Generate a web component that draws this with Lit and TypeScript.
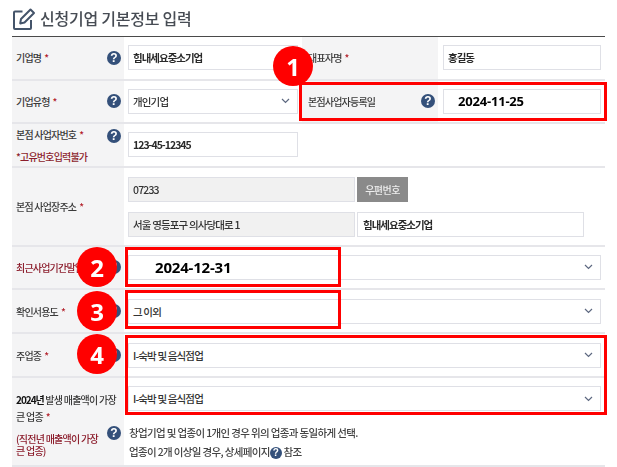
import { LitElement, html, css, svg } from "lit";
import { customElement } from "lit/decorators.js";

const help = () => html`<span class="help">?</span>`;
const chev = html`<svg class="chev" width="9" height="6" viewBox="0 0 9 6"><path d="M1 1 L4.5 4.5 L8 1" fill="none" stroke="#5d6880" stroke-width="1.2"/></svg>`;
const pencil = svg`<path d="M10 4.5H2.5a1 1 0 0 0-1 1V21a1 1 0 0 0 1 1h15a1 1 0 0 0 1-1v-8" fill="none" stroke="#44546a" stroke-width="2"/><path d="M8.5 12 18 2.5l3.5 3.5-9.5 9.5-4.3 .9z" fill="none" stroke="#44546a" stroke-width="2" stroke-linejoin="round"/>`;

@customElement("app-root")
export class AppRoot extends LitElement {
  static styles = css`
    :host { display: block; position: relative; width: 617px; height: 467px; overflow: hidden; background: #fff;
      font-family: "Noto Sans CJK KR", "Noto Sans", sans-serif; font-size: 10.5px; color: #3a3a3a; font-weight: 500; letter-spacing: -0.55px; }
    .wrap { padding: 0 12px; width: 593px; filter: blur(0.35px); }
    .title { height: 36px; display: flex; align-items: center; gap: 4px; font-size: 16px; font-weight: 500; color: #474c54; letter-spacing: -0.25px; }
    .form { border-top: 1px solid #4a4a4a; }
    .row { display: grid; grid-template-columns: 112px 1fr; border-bottom: 2px solid #e6e6ea; box-sizing: border-box; }
    .two { grid-template-columns: 112px 178px 136px 1fr; }
    .h1 { height: 43.5px; } .h2 { height: 43.5px; } .h3 { height: 79px; } .h4 { height: 44px; } .h8 { height: 89px; }
    .label { background: #f4f4f5; display: flex; align-items: center; padding-left: 4px; position: relative; white-space: nowrap; font-size: 10px; letter-spacing: -0.8px; }
    .label .help { position: absolute; right: 3px; top: 50%; margin-top: -7px; }
    .label.r { padding-left: 6px; }
    .label.r .help { right: 3px; }
    .req { color: #b3202a; margin-left: 3px; }
    .val { display: flex; align-items: center; padding-left: 4px; box-sizing: border-box; }
    .two .val.last { padding-left: 5px; }
    .field { box-sizing: border-box; height: 25px; border: 1.5px solid #dfe0e6; background: #fff; display: flex; align-items: center;
      padding: 0 5px 0 4px; color: #333; justify-content: space-between; font-size: 10.5px; white-space: nowrap; letter-spacing: -0.85px; }
    .strong { font-weight: 700; color: #2a2a2a; letter-spacing: -1px; }
    .w170 { width: 170px; } .w158 { width: 158px; } .wide { width: 473px; }
    .chev { margin-right: 2px; flex: none; }
    .date { font-family: "Open Sans", sans-serif; font-weight: 700; color: #000; letter-spacing: -0.2px; }
    .d1 { font-size: 13px; margin-left: 10px; }
    .d2 { font-size: 15px; margin-left: 22px; }
    .help { display: inline-flex; width: 14px; height: 14px; border-radius: 50%; background: #34507a; color: #fff; align-items: center; justify-content: center;
      font: 700 12px "Liberation Sans", sans-serif; letter-spacing: 0; flex: none; }
    .warn { color: #8c1d2c; }
    .lab3 { align-items: flex-start; flex-direction: column; justify-content: flex-start; padding-top: 3px; gap: 7px; }
    .lab3 .help { top: 5px; margin-top: 0; }
    .addr { display: flex; flex-direction: column; gap: 10px; padding-left: 4px; padding-top: 9px; }
    .line { display: flex; gap: 2px; }
    .gray { background: #f1f1f1; width: 227px; }
    .btn { width: 51px; height: 25px; background: #8a8a8a; color: #eee; display: flex; align-items: center; justify-content: center; font-size: 10px; }
    .w227 { width: 227px; padding-left: 5px; }
    .lab8 { flex-direction: column; align-items: flex-start; justify-content: flex-start; padding-top: 13px; line-height: 17px; letter-spacing: -0.75px; }
    .lab8 b { color: #111; font-weight: 700; letter-spacing: -1px; }
    .lab8 .warn { display: block; margin-top: 8px; line-height: 12px; }
    .lab8 .help { top: 48px; margin-top: 0; right: 3px; }
    .cell8 { padding-left: 4px; padding-top: 8px; }
    .note { margin-top: 12px; font-size: 10.5px; line-height: 19px; color: #444; padding-left: 1px; letter-spacing: -0.65px; }
    .note .help { vertical-align: 0; width: 12px; height: 12px; font-size: 10px; }
    .box { position: absolute; box-sizing: border-box; border: 3px solid #f00; }
    .num { position: absolute; width: 40px; height: 40px; border-radius: 50%; background: #f00; color: #fff; font: 700 24px "Open Sans", sans-serif;
      display: flex; align-items: center; justify-content: center; letter-spacing: 0; }
  `;

  render() {
    const boxes = [
      [299, 82, 308, 39],
      [125, 247, 216, 40],
      [125, 290, 216, 39],
      [125, 335, 482, 80],
    ];
    const nums = [
      [1, 293, 66],
      [2, 97, 267],
      [3, 97, 311],
      [4, 97, 354],
    ];
    return html`
      <div class="wrap">
        <div class="title">
          <svg width="24" height="23" viewBox="0 0 23 23">${pencil}</svg>
          <span>신청기업 기본정보 입력</span>
        </div>
        <div class="form">
          <div class="row two h1">
            <div class="label">기업명<span class="req">*</span>${help()}</div>
            <div class="val"><div class="field w170 strong">힘내세요중소기업</div></div>
            <div class="label r">대표자명<span class="req">*</span></div>
            <div class="val last"><div class="field w158 strong">홍길동</div></div>
          </div>
          <div class="row two h2">
            <div class="label">기업유형<span class="req">*</span>${help()}</div>
            <div class="val"><div class="field w170">개인기업${chev}</div></div>
            <div class="label r">본점사업자등록일${help()}</div>
            <div class="val last"><div class="field w158"><span class="date d1">2024-11-25</span></div></div>
          </div>
          <div class="row h2">
            <div class="label lab3">
              <div>본점 사업자번호<span class="req">*</span></div>
              <div class="warn">*고유번호입력불가</div>
              ${help()}
            </div>
            <div class="val"><div class="field w170 strong">123-45-12345</div></div>
          </div>
          <div class="row h3">
            <div class="label">본점 사업장주소<span class="req">*</span></div>
            <div class="addr">
              <div class="line"><div class="field gray">07233</div><div class="btn">우편번호</div></div>
              <div class="line"><div class="field gray">서울 영등포구 의사당대로 1</div><div class="field w227 strong">힘내세요중소기업</div></div>
            </div>
          </div>
          <div class="row h2">
            <div class="label"><span class="warn">최근사업기간말일</span><span class="req">*</span>${help()}</div>
            <div class="val"><div class="field wide"><span class="date d2">2024-12-31</span>${chev}</div></div>
          </div>
          <div class="row h4">
            <div class="label">확인서용도<span class="req">*</span>${help()}</div>
            <div class="val"><div class="field wide">그 이외${chev}</div></div>
          </div>
          <div class="row h4">
            <div class="label">주업종<span class="req">*</span>${help()}</div>
            <div class="val"><div class="field wide">I-숙박 및 음식점업${chev}</div></div>
          </div>
          <div class="row h8">
            <div class="label lab8">
              <div><b>2024년</b> 발생 매출액이 가장<br />큰 업종<span class="req">*</span></div>
              <span class="warn">(직전년 매출액이 가장<br />큰 업종)</span>
              ${help()}
            </div>
            <div class="cell8">
              <div class="field wide">I-숙박 및 음식점업${chev}</div>
              <div class="note">
                창업기업 및 업종이 1개인 경우 위의 업종과 동일하게 선택.<br />
                업종이 2개 이상일 경우, 상세페이지${help()} 참조
              </div>
            </div>
          </div>
        </div>
      </div>
      ${boxes.map(
        ([x, y, w, h]) => html`<div class="box" style="left:${x}px;top:${y}px;width:${w}px;height:${h}px"></div>`
      )}
      ${nums.map(
        ([n, x, y]) => html`<div class="num" style="left:${x - 20}px;top:${y - 20}px">${n}</div>`
      )}
    `;
  }
}
